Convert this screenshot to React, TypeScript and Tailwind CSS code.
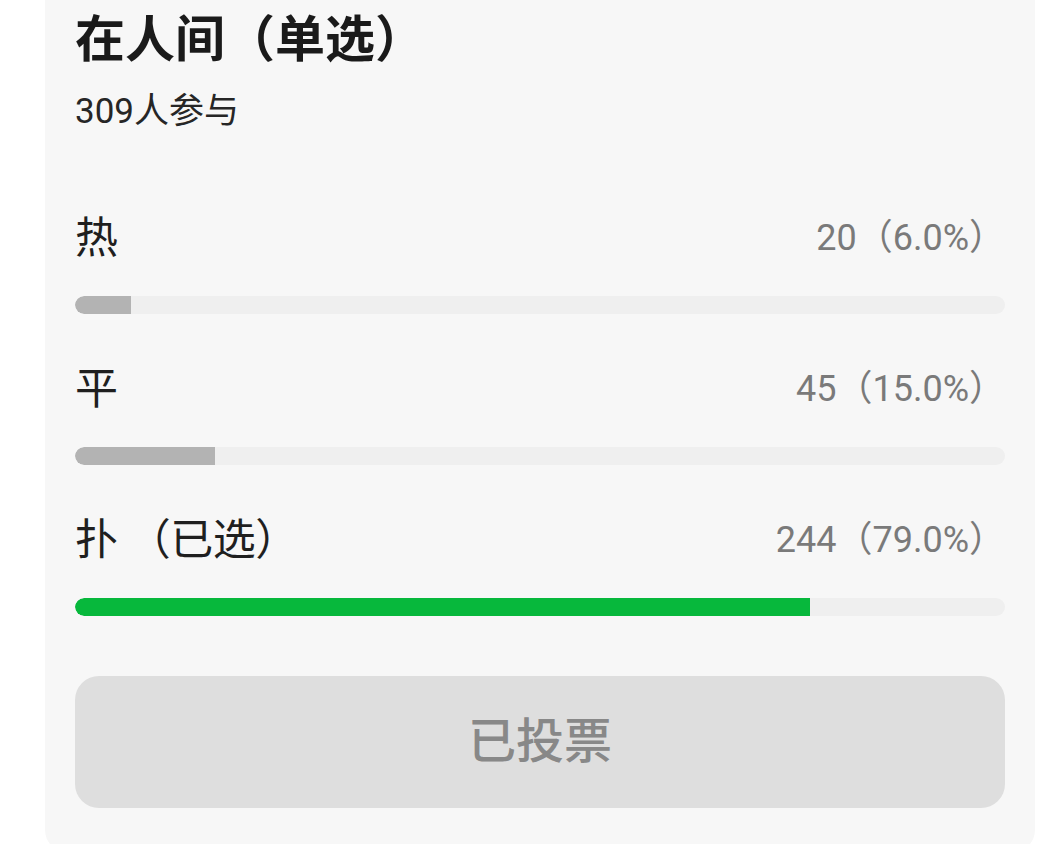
import React from 'react';

const options = [
  { label: '热', count: 20, pct: 6, selected: false },
  { label: '平', count: 45, pct: 15, selected: false },
  { label: '扑 （已选）', count: 244, pct: 79, selected: true },
];

const font = { fontFamily: 'Roboto, "Noto Sans CJK SC", sans-serif' };

export default function App() {
  return (
    <div className="w-[1064px] h-[844px] overflow-hidden bg-white" style={font}>
      <div className="ml-[45px] w-[990px] bg-[#f7f7f7] rounded-b-[22px] px-[30px] pt-[10px] pb-[44px]">
        {/* Header */}
        <h1 className="text-[50px] leading-[60px] font-bold text-[#1a1a1a]">在人间（单选）</h1>
        <p className="mt-[20px] text-[35px] leading-[44px] text-[#262626]">309人参与</p>

        {/* Options */}
        <div className="mt-[76px] flex flex-col gap-[47px]">
          {options.map((o) => (
            <div key={o.label}>
              <div className="flex items-center justify-between h-[56px]">
                <span className="text-[43px] leading-[56px] text-[#1f1f1f] tracking-[-0.5px]">{o.label}</span>
                <span className="text-[36px] leading-[56px] text-[#7a7a7a]">
                  {o.count}（{o.pct.toFixed(1)}%）
                </span>
              </div>
              <div className="mt-[30px] h-[18px] w-full rounded-full bg-[#efefef] overflow-hidden">
                <div
                  className={o.selected ? 'h-full rounded-l-full bg-[#07b83c]' : 'h-full rounded-l-full bg-[#b3b3b3]'}
                  style={{ width: `${o.pct}%` }}
                />
              </div>
            </div>
          ))}
        </div>

        {/* Button */}
        <button
          disabled
          className="mt-[60px] w-full h-[132px] rounded-[24px] bg-[#dedede] text-[48px] font-medium text-[#888888] flex items-center justify-center"
        >
          已投票
        </button>
      </div>
    </div>
  );
}
